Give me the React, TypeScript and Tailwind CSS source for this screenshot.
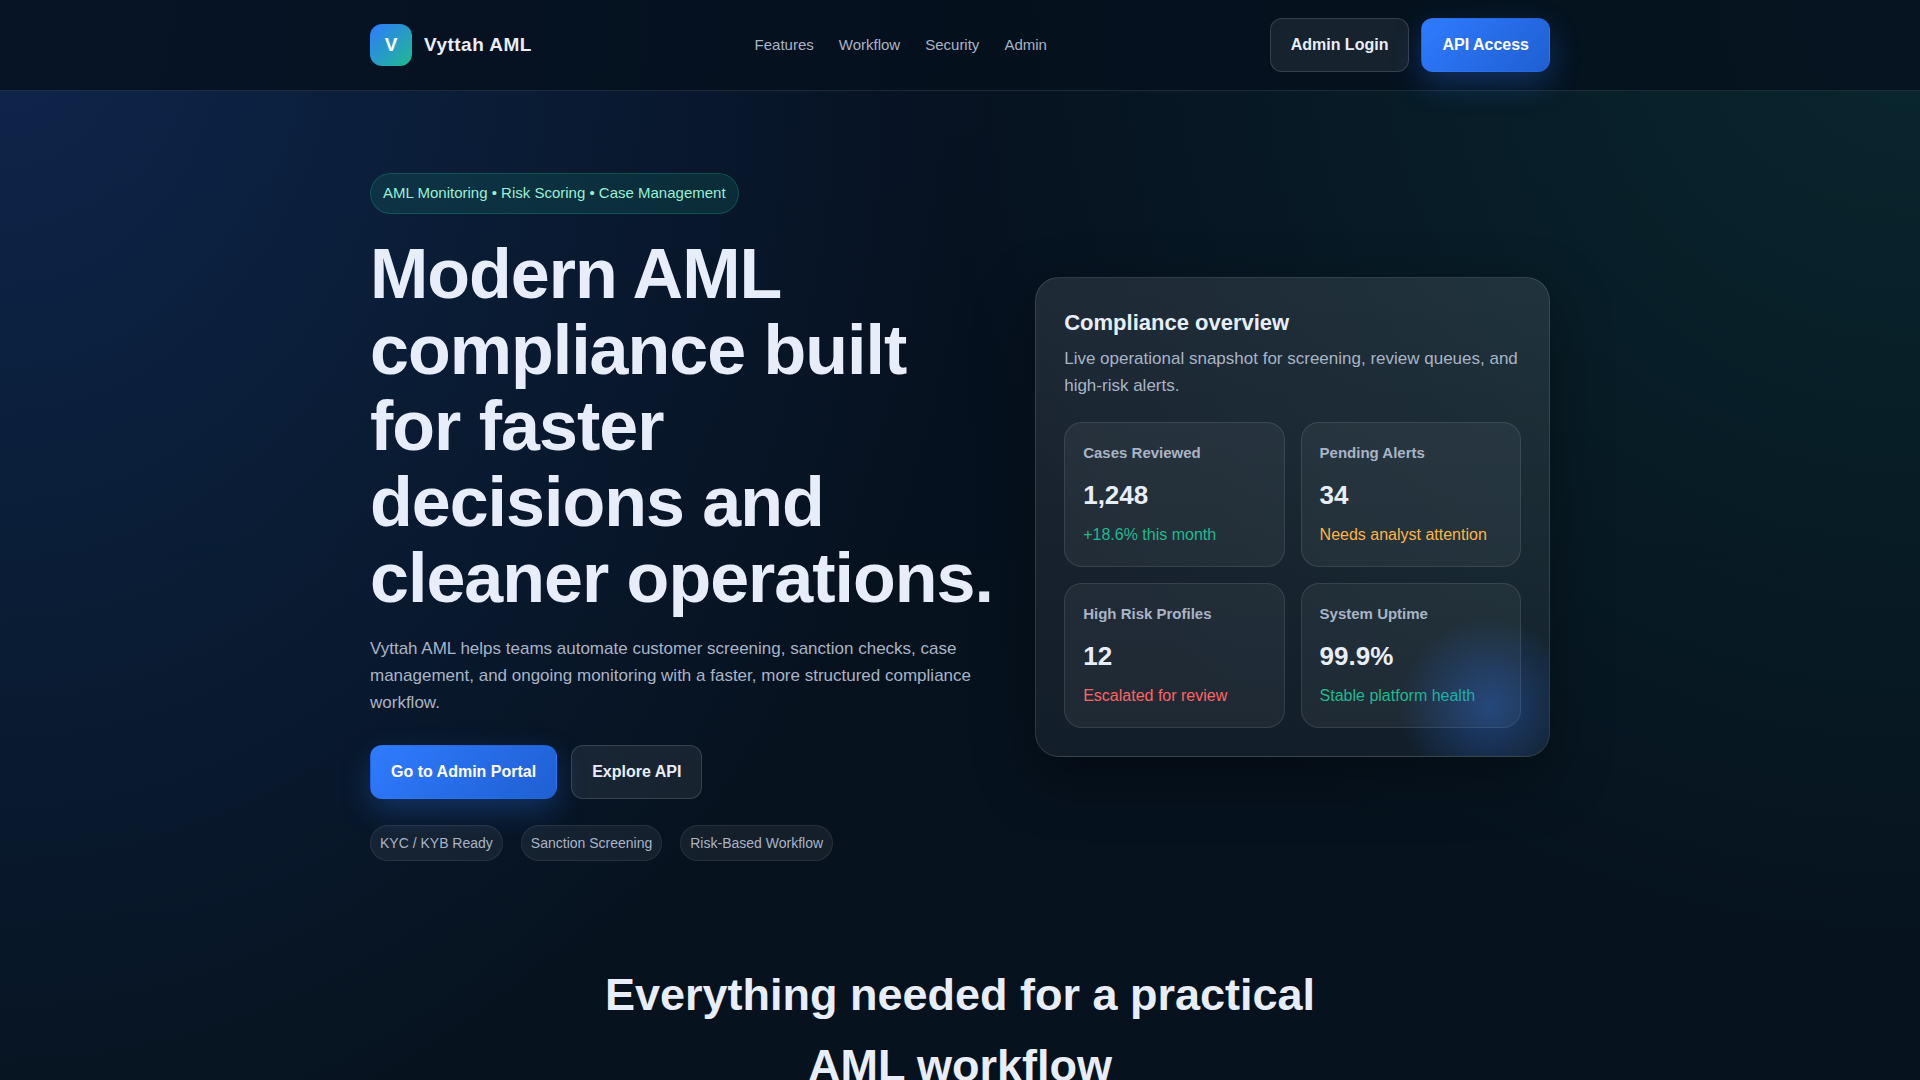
import { clsx } from 'clsx';

const navLinks = [
  { label: 'Features', href: '#features' },
  { label: 'Workflow', href: '#workflow' },
  { label: 'Security', href: '#security' },
  { label: 'Admin', href: '#admin' },
];

const stats = [
  { label: 'Cases Reviewed', value: '1,248', note: '+18.6% this month', color: 'text-[#1fba8f]' },
  { label: 'Pending Alerts', value: '34', note: 'Needs analyst attention', color: 'text-[#ffb347]' },
  { label: 'High Risk Profiles', value: '12', note: 'Escalated for review', color: 'text-[#ff6464]' },
  { label: 'System Uptime', value: '99.9%', note: 'Stable platform health', color: 'text-[#1fba8f]' },
];

const tags = ['KYC / KYB Ready', 'Sanction Screening', 'Risk-Based Workflow'];

function ButtonLink({ href, primary, children }: { href: string; primary?: boolean; children: string }) {
  return (
    <a
      href={href}
      className={clsx(
        'rounded-xl border px-5 py-[13px] text-base leading-[26px] font-bold whitespace-nowrap',
        primary
          ? 'border-transparent bg-linear-135 from-[#2f7bff] to-[#1f5fd1] text-white shadow-[0_12px_30px_rgba(47,123,255,0.28)]'
          : 'border-white/14 bg-white/7 text-[#e8eef9]'
      )}
    >
      {children}
    </a>
  );
}

function StatCard({ label, value, note, color }: (typeof stats)[number]) {
  return (
    <div className="rounded-[18px] border border-white/10 bg-white/5 p-[18px]">
      <h4 className="mb-[9px] text-[15px] leading-6 font-bold text-[#a9b4c6]">{label}</h4>
      <div className="mb-[6px] text-[26px] leading-[42px] font-bold">{value}</div>
      <div className={clsx('text-base leading-[26px]', color)}>{note}</div>
    </div>
  );
}

export default function App() {
  return (
    <div className="min-h-screen bg-[radial-gradient(1000px_1240px_at_0_0,rgba(47,123,255,0.20),transparent),radial-gradient(1000px_1000px_at_100%_0,rgba(31,186,143,0.13),transparent),linear-gradient(180deg,#061120,#06121d)] font-['Liberation_Sans',Arial,sans-serif] text-[#e8eef9]">
      <header className="border-b border-white/10 bg-[#05101d]/80">
        <div className="mx-auto flex max-w-[1180px] items-center justify-between py-[18px]">
          <a href="#" className="flex items-center gap-3">
            <span className="flex size-[42px] items-center justify-center rounded-xl bg-linear-135/srgb from-[#2f7bff] to-[#1fba8f] text-[19px] leading-[30px] font-bold text-white">V</span>
            <span className="text-[19px] leading-[30px] font-bold tracking-wide">Vyttah AML</span>
          </a>
          <nav className="flex gap-[25px] text-[15px] leading-6 text-[#a9b4c6]">
            {navLinks.map(l => <a key={l.label} href={l.href}>{l.label}</a>)}
          </nav>
          <div className="flex gap-3">
            <ButtonLink href="#admin">Admin Login</ButtonLink>
            <ButtonLink href="#api" primary>API Access</ButtonLink>
          </div>
        </div>
      </header>

      <main>
        <section className="mx-auto grid max-w-[1180px] grid-cols-[1.1fr_0.9fr] items-center gap-9 pt-[82px] pb-[98px]">
          <div>
            <span className="inline-block rounded-full border border-[#1fba8f]/25 bg-[#1fba8f]/14 px-3 pt-2 pb-[9px] align-top text-[15px] leading-[22px] text-[#9af0d4]">
              AML Monitoring • Risk Scoring • Case Management
            </span>
            <h1 className="mt-[22px] text-[70px] leading-[76px] font-bold tracking-[-1px]">
              Modern AML compliance built for faster<br /> decisions and cleaner operations.
            </h1>
            <p className="mt-[19px] max-w-[620px] text-[17px] leading-[27px] text-[#a9b4c6]">
              Vyttah AML helps teams automate customer screening, sanction checks, case management, and ongoing monitoring with a faster, more structured compliance workflow.
            </p>
            <div className="mt-[29px] flex flex-wrap gap-[14px]">
              <ButtonLink href="#admin" primary>Go to Admin Portal</ButtonLink>
              <ButtonLink href="#api">Explore API</ButtonLink>
            </div>
            <ul className="mt-[26px] flex flex-wrap gap-[18px]">
              {tags.map(t => (
                <li key={t} className="rounded-full border border-white/8 bg-white/6 px-[9px] py-[6px] text-sm leading-[22px] text-[#a9b4c6]">{t}</li>
              ))}
            </ul>
          </div>

          <div className="relative overflow-hidden rounded-3xl border border-white/12 bg-linear-to-b from-white/10 to-white/5 p-7 shadow-[0_20px_60px_rgba(0,0,0,0.35)]">
            <h3 className="mb-[6px] text-[22px] leading-[33px] font-bold">Compliance overview</h3>
            <p className="text-[17px] leading-[27px] text-[#a9b4c6]">
              Live operational snapshot for screening, review queues, and high-risk alerts.
            </p>
            <div className="mt-[23px] grid grid-cols-2 gap-4">
              {stats.map(s => <StatCard key={s.label} {...s} />)}
            </div>
            <div className="pointer-events-none absolute -right-[30px] -bottom-[40px] size-[180px] bg-[radial-gradient(circle,rgba(47,123,255,0.35),transparent_70%)]" />
          </div>
        </section>

        <section id="features" className="mx-auto max-w-[760px] text-center">
          <h2 className="text-[45px] leading-[71px] font-bold">Everything needed for a practical AML workflow</h2>
        </section>
      </main>
    </div>
  );
}
